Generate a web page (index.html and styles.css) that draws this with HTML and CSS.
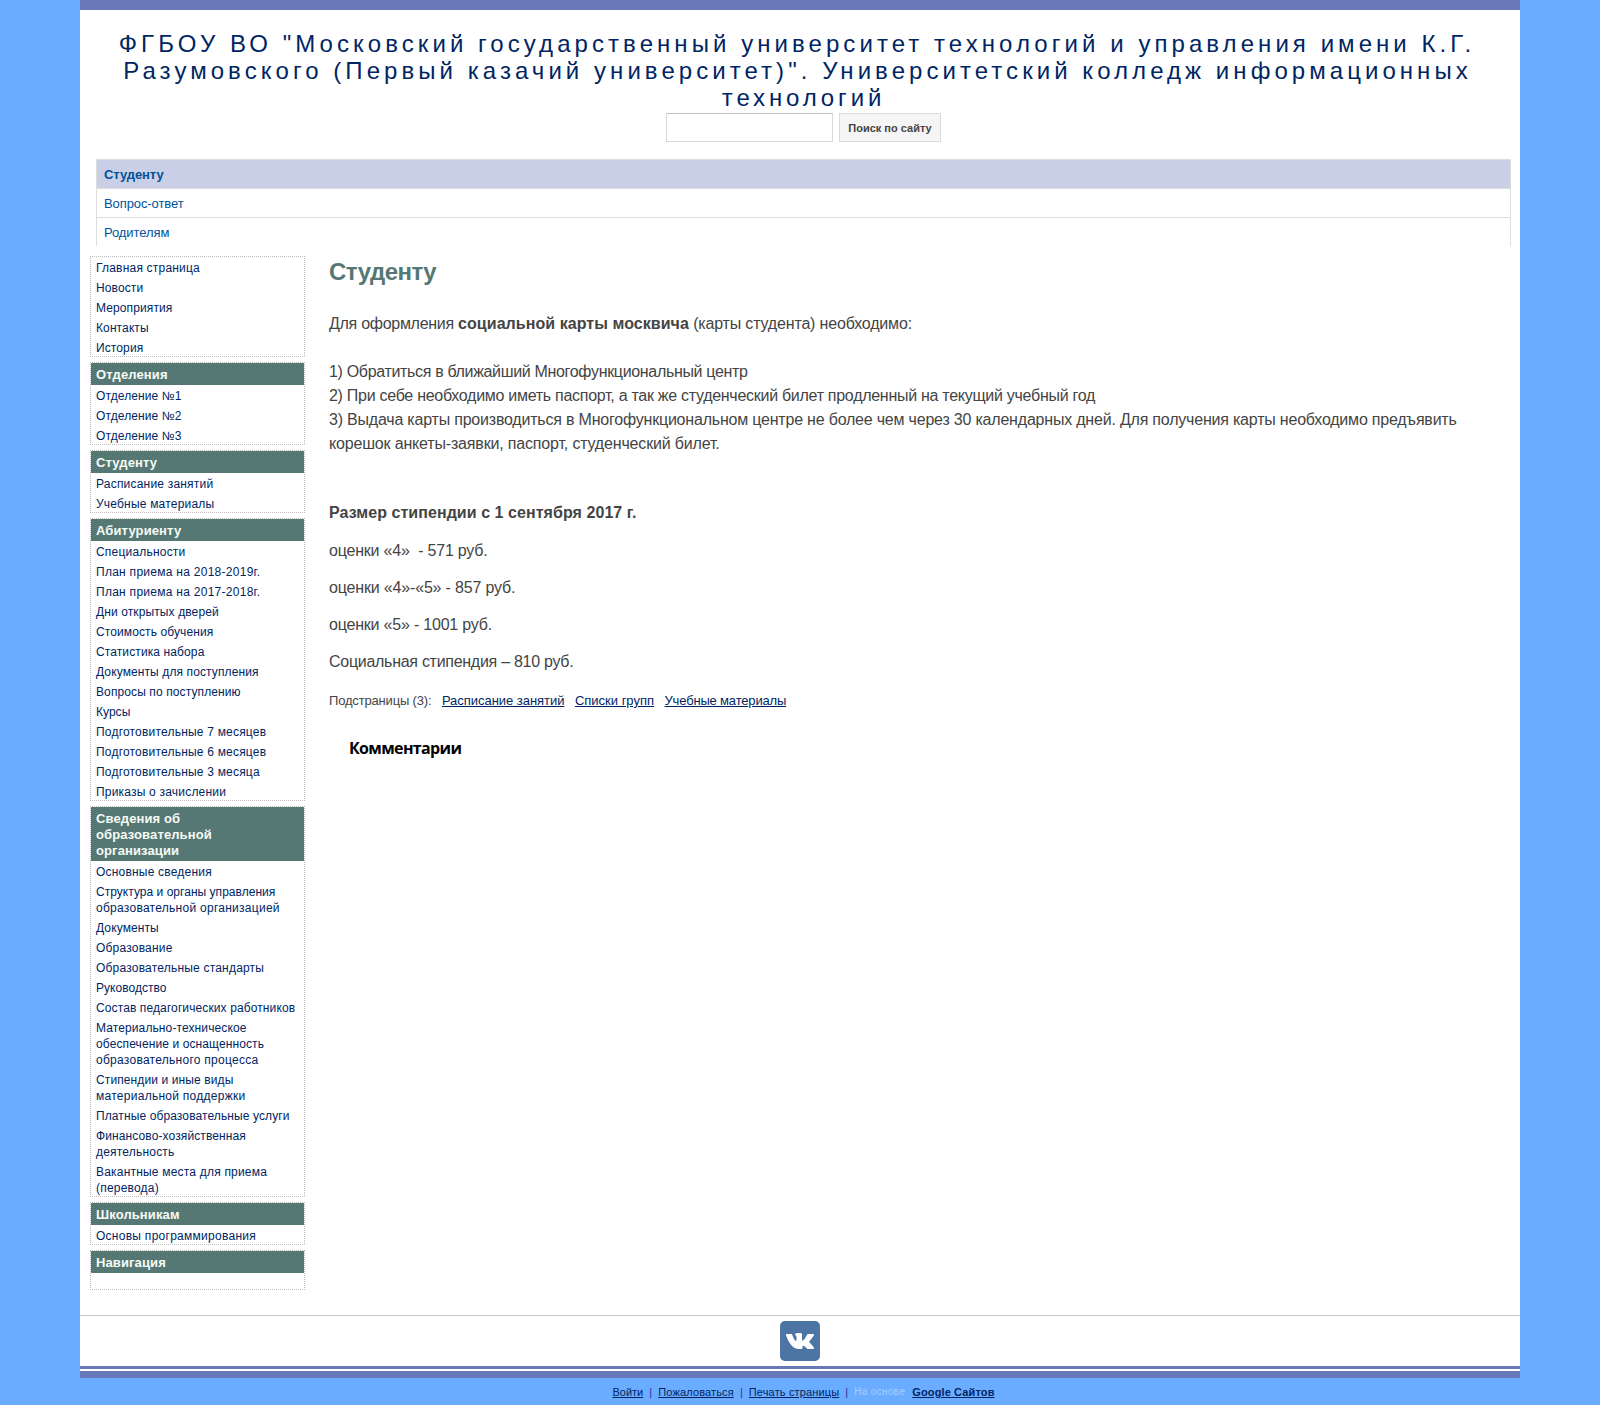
FILE: index.html
```html
<!DOCTYPE html>
<html lang="ru">
<head>
<meta charset="utf-8">
<title>Студенту</title>
<link rel="stylesheet" href="styles.css">
</head>
<body>
<div class="page">
  <header class="header">
    <div class="site-title"><span class="t1">ФГБОУ ВО "Московский государственный университет технологий и управления имени К.Г.</span><br><span class="t2">Разумовского (Первый казачий университет)". Университетский колледж информационных</span><br><span class="t3">технологий</span></div>
    <form class="search"><input type="text" class="search-input" aria-label="Поиск"><button type="button" class="search-button"><span>Поиск по сайту</span></button></form>
  </header>
  <nav class="topnav">
    <a class="current"><span>Студенту</span></a>
    <a><span>Вопрос-ответ</span></a>
    <a><span>Родителям</span></a>
  </nav>
  <div class="columns">
    <aside class="sidebar">
      <section class="box"><ul>
        <li class="w">Главная страница</li><li>Новости</li><li>Мероприятия</li><li>Контакты</li><li>История</li>
      </ul></section>
      <section class="box"><h4>Отделения</h4><ul>
        <li>Отделение №1</li><li>Отделение №2</li><li>Отделение №3</li>
      </ul></section>
      <section class="box"><h4>Студенту</h4><ul>
        <li class="w">Расписание занятий</li><li class="w">Учебные материалы</li>
      </ul></section>
      <section class="box"><h4>Абитуриенту</h4><ul>
        <li class="w">Специальности</li><li class="xw">План приема на 2018-2019г.</li><li class="xw">План приема на 2017-2018г.</li><li>Дни открытых дверей</li><li>Стоимость обучения</li><li>Статистика набора</li><li>Документы для поступления</li><li>Вопросы по поступлению</li><li class="n">Курсы</li><li class="w">Подготовительные 7 месяцев</li><li class="w">Подготовительные 6 месяцев</li><li class="w">Подготовительные 3 месяца</li><li class="w">Приказы о зачислении</li>
      </ul></section>
      <section class="box"><h4>Сведения об<br>образовательной<br>организации</h4><ul>
        <li class="w">Основные сведения</li><li class="n">Структура и органы управления<br><span class="xw">образовательной организацией</span></li><li>Документы</li><li class="w">Образование</li><li class="w">Образовательные стандарты</li><li class="n">Руководство</li><li>Состав педагогических работников</li><li>Материально-техническое<br>обеспечение и оснащенность<br><span class="xw">образовательного процесса</span></li><li>Стипендии и иные виды<br><span class="xw">материальной поддержки</span></li><li>Платные образовательные услуги</li><li>Финансово-хозяйственная<br><span class="w">деятельность</span></li><li class="w">Вакантные места для приема<br>(перевода)</li>
      </ul></section>
      <section class="box"><h4>Школьникам</h4><ul>
        <li class="xw">Основы программирования</li>
      </ul></section>
      <section class="box"><h4>Навигация</h4><div class="empty"></div></section>
    </aside>
    <main class="content">
      <h1><span>Студенту</span></h1>
      <div class="intro">
        <p><span class="c3">Для оформления </span><b>социальной карты москвича</b><span class="c1"> (карты студента) необходимо:</span></p>
        <p class="steps"><span class="c4">1) Обратиться в ближайший Многофункциональный центр</span><br><span class="c3">2) При себе необходимо иметь паспорт, а так же студенческий билет продленный на текущий учебный год</span><br><span class="c2">3) Выдача карты производиться в Многофункциональном центре не более чем через 30 календарных дней. Для получения карты необходимо предъявить</span><br><span class="c1">корешок анкеты-заявки, паспорт, студенческий билет.</span></p>
      </div>
      <div class="grants">
        <p class="lead"><b>Размер стипендии с 1 сентября 2017 г.</b></p>
        <p class="c2">оценки «4»&nbsp; - 571 руб.</p>
        <p class="c1">оценки «4»-«5» - 857 руб.</p>
        <p class="c2">оценки «5» - 1001 руб.</p>
        <p class="c3">Социальная стипендия – 810 руб.</p>
      </div>
      <div class="subpages"><span class="c1">Подстраницы (3):</span><a class="c0">Расписание занятий</a><a>Списки групп</a><a class="c1">Учебные материалы</a></div>
      <h3 class="comments"><span>Комментарии</span></h3>
    </main>
  </div>
  <div class="social">
    <svg width="40" height="40" viewBox="0 0 40 40" role="img" aria-label="VK"><rect width="40" height="40" rx="5" fill="#4c75a3"/><path fill="#fff" d="M6 13h5.2c.7 0 .9.3 1.100.9 1.100 3.200 2.900 6 3.700 6 .3 0 .5-.2.5-1.100v-3c-.1-1.600-1.500-1.900-1.500-2.500 0-.5 1-1.300 2.500-1.300h2.900c1.300 0 1.600.6 1.600 1.500v5.200c0 .6.3.9.6.9 1 0 3.300-3.500 4.200-5.700.3-.6.6-.9 1.300-.9h4.600c1.200 0 1.500.6 1.200 1.200-.8 2-4.700 5.800-4.700 6.600 0 1 4.200 4.200 4.800 6 .2.700-.1 1.200-1.100 1.200h-4.700c-1.500 0-3.500-3.300-4.800-3.300-.8 0-.9.5-.9 2 0 .8-.4 1.300-2 1.300h-1.700C13.200 28 9 22.700 6 14.200Z"/></svg>
  </div>
  <div class="rule"></div>
</div>
<footer class="footer"><a class="f1">Войти</a><i>|</i><a class="f2">Пожаловаться</a><i>|</i><a class="f3">Печать страницы</a><i>|</i><span class="powered">На основе</span><a class="f4">Google Сайтов</a></footer>
</body>
</html>
```
FILE: styles.css
```css
* { box-sizing: border-box; }
body { margin: 0; background: #6aacff; font-family: "Liberation Sans", Arial, sans-serif; color: #444; height: 1405px; overflow: hidden; }
p, h1, h3, h4, ul { margin: 0; padding: 0; }
.page { width: 1440px; height: 1378px; margin: 0 auto; background: #fff; border-top: 10px solid #6878b8; border-bottom: 7px solid #6878b8; display: flex; flex-direction: column; }
.header { height: 149px; padding: 20px 0 0 7px; text-align: center; flex: none; }
.site-title { font-size: 24px; line-height: 27px; letter-spacing: 4px; color: #002563; white-space: nowrap; height: 83px; }
.t1 { letter-spacing: 4.06px; margin-right: 13px; }
.t2 { letter-spacing: 4.05px; margin-right: 12px; }
.t3 { letter-spacing: 3.85px; }
.search { display: flex; justify-content: center; gap: 6px; }
.search-input { width: 167px; height: 29px; border: 1px solid #d9d9d9; border-top-color: #c0c0c0; padding: 0; }
.search-button { width: 102px; height: 29px; border: 1px solid #dcdcdc; background: #f5f5f5; padding: 1px 0 0; font: bold 11px "Liberation Sans", Arial, sans-serif; color: #444; white-space: nowrap; }
.topnav { margin: 0 9px 0 16px; height: 87px; border: 1px solid #ddd; border-bottom: 0; flex: none; font-size: 13px; line-height: 28px; letter-spacing: -.09px; color: #00529b; }
.topnav a { display: block; height: 29px; padding: 1px 7px 0; border-bottom: 1px solid #ddd; }
.topnav a:last-child { border-bottom: 0; }
.topnav .current { background: #c9cfe6; font-weight: bold; }
.columns { display: flex; gap: 24px; padding: 10px 10px 0; height: 1069px; flex: none; }
.sidebar { width: 215px; display: flex; flex-direction: column; gap: 5px; font-size: 12px; line-height: 16px; letter-spacing: .11px; color: #002563; }
.sidebar .n { letter-spacing: .03px; }
.sidebar .w { letter-spacing: .2px; }
.sidebar .xw { letter-spacing: .27px; }
.box { border: 1px dotted #bbb; }
.box h4 { background: #557874; color: #f5fbf5; font-size: 13px; line-height: 16px; padding: 4px 5px 2px; letter-spacing: .12px; }
.box ul { list-style: none; padding: 3px 0 0 5px; display: grid; gap: 4px; white-space: nowrap; }
.empty { height: 16px; }
.content { flex: 1; white-space: nowrap; font-size: 16px; line-height: 24px; }
.content h1 { font-size: 24px; line-height: 30px; padding-top: 1px; letter-spacing: -.5px; color: #557874; }
.content b { letter-spacing: .06px; }
.c0 { letter-spacing: -.04px; }
.c1 { letter-spacing: -.17px; }
.c2 { letter-spacing: -.205px; }
.c3 { letter-spacing: -.28px; }
.c4 { letter-spacing: -.33px; }
.intro { padding-top: 25px; }
.steps { padding-top: 24px; }
.grants { padding-top: 45px; display: grid; gap: 13px; }
.grants .lead { padding-bottom: 1px; }
.subpages { display: flex; gap: 10.5px; padding-top: 17px; font-size: 13px; line-height: 20px; }
.subpages a { color: #002563; text-decoration: underline; }
.comments { padding: 25px 0 0 20px; font: bold 16px/24px "Open Sans", sans-serif; letter-spacing: -.65px; color: #000; }
.social { height: 51px; border-top: 1px solid #c6c6c6; display: flex; justify-content: center; padding-top: 5px; flex: none; }
.rule { height: 3px; background: #6878b8; flex: none; }
.footer { display: flex; justify-content: center; padding: 6px 0 0 7px; font-size: 11px; line-height: 16px; color: #002563; white-space: nowrap; }
.footer a { text-decoration: underline; }
.footer i { font-style: normal; color: #3030a0; width: 15px; text-align: center; }
.footer .f2, .footer .f3 { letter-spacing: .14px; }
.powered { color: #a6ccff; font-size: 10px; letter-spacing: .35px; }
.footer .f4 { font-weight: bold; margin-left: 7px; letter-spacing: .12px; }
```
